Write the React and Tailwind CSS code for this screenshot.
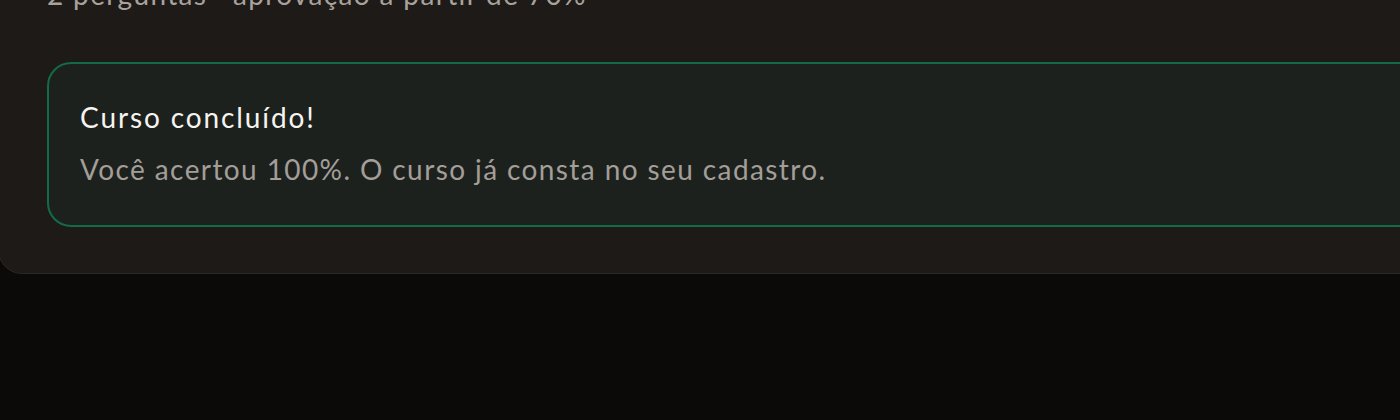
export default function App() {

    return (

        <div className="h-screen overflow-hidden bg-[#0b0a09] font-['Lato',sans-serif]">

            {/* QUIZ CARD */}
            <div className="-mt-[59px] -ml-[2px] w-[1480px] rounded-b-[24px] border border-[#2a2725] bg-[#1e1a17] px-12 pt-8 pb-[46px]">

                <p className="text-[28px] leading-[40px] tracking-[1.35px] text-[#a8a29d]">

                    2 perguntas · aprovação a partir de 70%

                </p>

                {/* RESULT */}
                <div className="mt-12 rounded-[24px] border-2 border-[#136b48] bg-[#1d211e] pl-[31px] pr-8 pt-[33px] pb-[36px]">

                    <h3 className="text-[28px] leading-[40px] tracking-[1.9px] text-[#f6f4f0]">

                        Curso concluído!

                    </h3>

                    <p className="mt-[12px] text-[28px] leading-[40px] tracking-[1.4px] text-[#a39e98]">

                        Você acertou 100%. O curso já consta no seu cadastro.

                    </p>

                </div>

            </div>

        </div>
    )
}
